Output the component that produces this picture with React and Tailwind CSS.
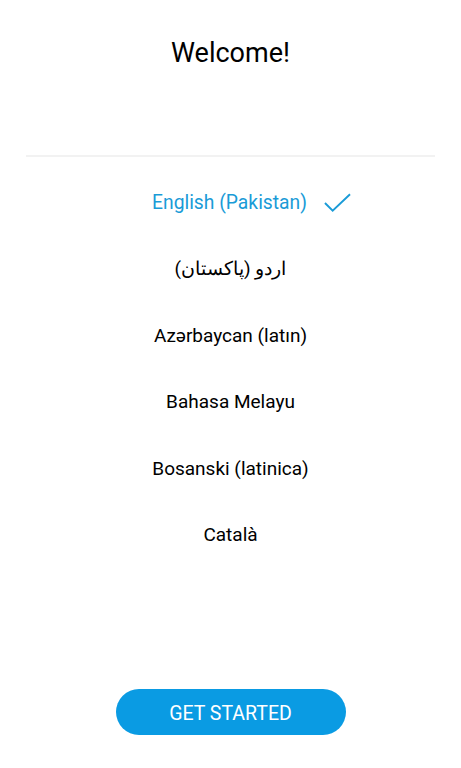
const languages = [
  'English (Pakistan)',
  'اردو (پاکستان)',
  'Azərbaycan (latın)',
  'Bahasa Melayu',
  'Bosanski (latinica)',
  'Català',
];

export default function App() {
  const selected = 0;

  return (
    <div className="w-[461px] h-[768px] bg-white flex flex-col font-['Roboto',sans-serif] text-black">
      {/* Header */}
      <div className="h-[104px] flex items-start justify-center pt-[35px]">
        <h1 className="text-[27px] leading-[36px]">Welcome!</h1>
      </div>
      <div className="mt-[51px] mx-[26px] h-[2px] bg-[#f2f2f2]" />

      {/* Language list */}
      <ul className="flex flex-col mt-[13px]">
        {languages.map((lang, i) => (
          <li key={lang} className="h-[66.4px] flex items-center justify-center">
            {i === selected ? (
              <span className="relative text-[19.3px] text-[#1a9bd7] -translate-x-[1px]">
                {lang}
                <svg viewBox="0 0 28 20" className="absolute left-[calc(100%+17px)] top-1/2 -translate-y-1/2 w-[27px] h-[20px]" fill="none" stroke="#1a9bd7" strokeWidth="2">
                  <path d="M1 10 L9 18 L27 1" />
                </svg>
              </span>
            ) : (
              <span dir="auto" className="text-[19px] font-['Roboto','Noto_Sans',sans-serif]">{lang}</span>
            )}
          </li>
        ))}
      </ul>

      {/* Button */}
      <div className="mt-auto mb-[33px] flex justify-center">
        <button className="w-[230px] h-[46px] rounded-full bg-[#0a9be3] text-white text-[19.5px] pt-[3px]">
          GET STARTED
        </button>
      </div>
    </div>
  );
}
